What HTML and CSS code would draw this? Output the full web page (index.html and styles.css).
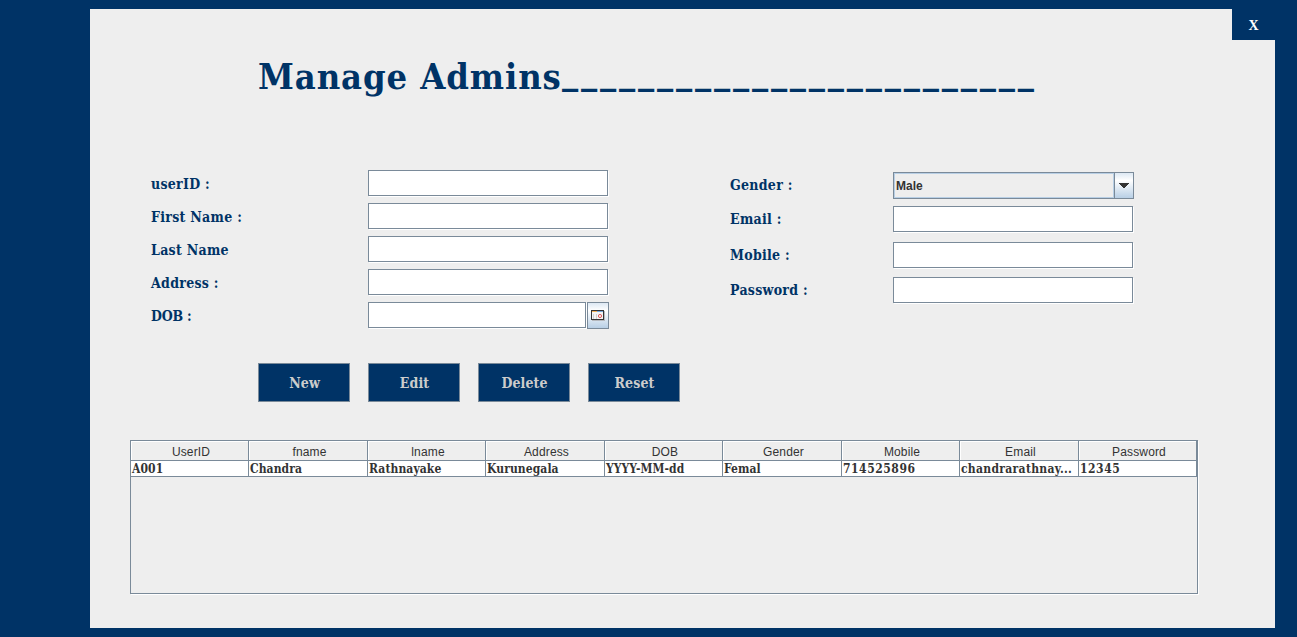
FILE: index.html
```
<!DOCTYPE html>
<html lang="en">
<head>
<meta charset="utf-8">
<title>Manage Admins</title>
<link rel="stylesheet" href="styles.css">
</head>
<body>
<main class="panel">
  <button class="close">X</button>
  <h1 class="title"><span class="title-text">Manage Admins</span><span class="rule">_________________________</span></h1>
  <form class="form">
    <div class="column left">
      <div class="row"><label class="label">userID :</label><div class="field"></div></div>
      <div class="row"><label class="label">First Name :</label><div class="field"></div></div>
      <div class="row"><label class="label">Last Name</label><div class="field"></div></div>
      <div class="row"><label class="label">Address :</label><div class="field"></div></div>
      <div class="row"><label class="label dob">DOB :</label><div class="field date"></div>
        <div class="picker">
          <svg width="14" height="12" viewBox="0 0 14 12" shape-rendering="crispEdges">
            <path fill="#b5b8bd" d="M1 1h13v10H1z"/>
            <path fill="#333" d="M0 0h13v10H0z"/>
            <path fill="#f4f4f4" d="M1 2h11v7H1z"/>
            <path fill="#f0b057" d="M1 1h5v1H1z"/>
            <path fill="#77a8dc" d="M6 1h6v1H6z"/>
            <path fill="#d0d0d0" d="M2 4h1v5H2zM5 4h1v5H5z"/>
            <circle cx="9" cy="6" r="1.6" fill="none" stroke="#e05a5a" stroke-width="1" shape-rendering="auto"/>
          </svg>
        </div>
      </div>
    </div>
    <div class="column right">
      <div class="row"><label class="label">Gender :</label>
        <div class="select"><span class="value">Male</span><span class="arrow"><svg width="10" height="5" viewBox="0 0 10 5" shape-rendering="crispEdges"><path fill="#333" d="M0 0h10v1H9v1H8v1H7v1H6v1H4V4H3V3H2V2H1V1H0z"/></svg></span></div>
      </div>
      <div class="row"><label class="label">Email :</label><div class="field"></div></div>
      <div class="row"><label class="label">Mobile :</label><div class="field"></div></div>
      <div class="row"><label class="label">Password :</label><div class="field"></div></div>
    </div>
  </form>
  <div class="actions">
    <button class="button">New</button>
    <button class="button">Edit</button>
    <button class="button">Delete</button>
    <button class="button">Reset</button>
  </div>
  <div class="table">
    <div class="cells head">
      <span>UserID</span><span>fname</span><span>lname</span><span>Address</span><span>DOB</span><span>Gender</span><span>Mobile</span><span>Email</span><span>Password</span>
    </div>
    <div class="cells record">
      <span>A001</span><span>Chandra</span><span>Rathnayake</span><span>Kurunegala</span><span>YYYY-MM-dd</span><span>Femal</span><span class="digits">714525896</span><span class="email">chandrarathnay...</span><span class="digits">12345</span>
    </div>
  </div>
</main>
</body>
</html>
```
FILE: styles.css
```
* { box-sizing: border-box; }
body {
  margin: 0;
  height: 637px;
  padding: 9px 22px 9px 90px;
  background: #003366;
  font-family: "DejaVu Serif Condensed", "DejaVu Serif", serif;
  font-stretch: condensed;
  font-weight: bold;
  overflow: hidden;
}
.panel {
  position: relative;
  height: 619px;
  padding: 44px 40px 0;
  background: #eee;
}
.close {
  position: absolute;
  top: 0;
  right: 0;
  width: 43px;
  height: 31px;
  padding: 2px 0 0;
  border: 0;
  background: #003366;
  color: #fff;
  font: bold 14px "Liberation Serif", serif;
}
.title {
  display: flex;
  height: 46px;
  margin: 0 0 0 128px;
  color: #003366;
  font-size: 36px;
  line-height: 46px;
  white-space: nowrap;
}
.title-text {
  width: 304px;
  letter-spacing: 0.9px;
}
.rule { letter-spacing: 2.8px; line-height: 37px; }
.form {
  display: flex;
  margin: 71px 0 0 21px;
  height: 160px;
}
.column { display: flex; flex-direction: column; }
.left { width: 579px; gap: 7px; }
.right { padding-top: 2px; }
.row { display: flex; height: 26px; }
.left .label { width: 217px; line-height: 28px; }
.left .dob { letter-spacing: -0.2px; }
.right .label { width: 163px; }
.right .row:nth-child(1) { height: 27px; margin-bottom: 7px; }
.right .row:nth-child(2) { margin-bottom: 10px; }
.right .row:nth-child(3) { margin-bottom: 9px; }
.label {
  color: #003366;
  font-size: 14px;
  letter-spacing: 0.28px;
  line-height: 26px;
}
.field {
  width: 240px;
  height: 26px;
  border: 1px solid #7a8a99;
  background: #fff;
  box-shadow: 1px 1px #fff;
}
.date { width: 218px; }
.picker {
  display: flex;
  width: 22px;
  height: 27px;
  margin-left: 1px;
  padding: 7px 0 0 3px;
  border: 1px solid #7a8a99;
  background: linear-gradient(#dde8f3, #fff 30%, #b8cfe5);
}
.select {
  display: flex;
  width: 241px;
  height: 27px;
  border: 1px solid #7a8a99;
}
.value {
  width: 220px;
  padding-left: 1px;
  border: 1px solid #b8cfe5;
  color: #333;
  font: bold 12px/25px "Liberation Sans", sans-serif;
}
.arrow {
  display: flex;
  width: 19px;
  padding: 10px 0 0 4px;
  border-left: 1px solid #7a8a99;
  background: linear-gradient(#dde8f3, #fff 30%, #b8cfe5);
}
.actions {
  display: flex;
  gap: 18px;
  margin: 33px 0 0 128px;
}
.button {
  width: 92px;
  height: 39px;
  padding: 0 0 0 1px;
  border: 1px solid #7a8a99;
  background: #003366;
  color: #ccc;
  font: inherit;
  font-size: 14px;
  letter-spacing: 0.1px;
}
.table {
  width: 1068px;
  height: 154px;
  margin-top: 38px;
  border: 1px solid #7a8a99;
  box-shadow: 1px 1px #fff;
}
.cells {
  display: grid;
  grid-template-columns: 118px 119px 118px 119px 118px 119px 118px 119px 118px;
  color: #333;
  white-space: nowrap;
}
.cells span { border: solid #7a8a99; border-width: 0 1px 1px 0; }
.head span {
  height: 20px;
  padding-left: 3px;
  box-shadow: inset 1px 1px #fff;
  font: 12px/22px "Liberation Sans", sans-serif;
  letter-spacing: 0.15px;
  text-align: center;
}
.record span {
  height: 16px;
  padding-left: 1px;
  background: #fff;
  font-size: 12px;
  letter-spacing: 0.08px;
  line-height: 16px;
}
.record .email { letter-spacing: 0.3px; }
.record .digits { letter-spacing: 0.55px; }
```
